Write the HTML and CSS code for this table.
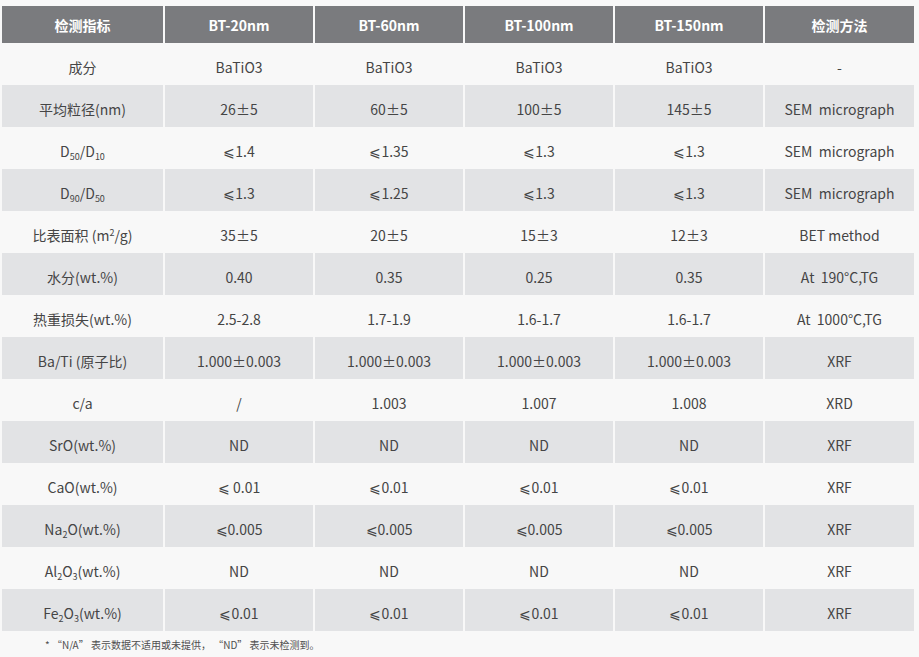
FILE: index.html
```html
<!DOCTYPE html>
<html lang="zh">
<head>
<meta charset="utf-8">
<link rel="stylesheet" href="styles.css">
</head>
<body>
<div class="table">
  <div class="row head">
    <div class="cell">检测指标</div><div class="cell">BT-20nm</div><div class="cell">BT-60nm</div><div class="cell">BT-100nm</div><div class="cell">BT-150nm</div><div class="cell">检测方法</div>
  </div>
  <div class="row">
    <div class="cell">成分</div><div class="cell">BaTiO3</div><div class="cell">BaTiO3</div><div class="cell">BaTiO3</div><div class="cell">BaTiO3</div><div class="cell">-</div>
  </div>
  <div class="row alt">
    <div class="cell">平均粒径(nm)</div><div class="cell">26±5</div><div class="cell">60±5</div><div class="cell">100±5</div><div class="cell">145±5</div><div class="cell">SEM&nbsp; micrograph</div>
  </div>
  <div class="row">
    <div class="cell">D<sub>50</sub>/D<sub>10</sub></div><div class="cell">⩽1.4</div><div class="cell">⩽1.35</div><div class="cell">⩽1.3</div><div class="cell">⩽1.3</div><div class="cell">SEM&nbsp; micrograph</div>
  </div>
  <div class="row alt">
    <div class="cell">D<sub>90</sub>/D<sub>50</sub></div><div class="cell">⩽1.3</div><div class="cell">⩽1.25</div><div class="cell">⩽1.3</div><div class="cell">⩽1.3</div><div class="cell">SEM&nbsp; micrograph</div>
  </div>
  <div class="row">
    <div class="cell">比表面积 (m<sup>2</sup>/g)</div><div class="cell">35±5</div><div class="cell">20±5</div><div class="cell">15±3</div><div class="cell">12±3</div><div class="cell">BET method</div>
  </div>
  <div class="row alt">
    <div class="cell">水分(wt.%)</div><div class="cell">0.40</div><div class="cell">0.35</div><div class="cell">0.25</div><div class="cell">0.35</div><div class="cell">At&nbsp; 190°C,TG</div>
  </div>
  <div class="row">
    <div class="cell">热重损失(wt.%)</div><div class="cell">2.5-2.8</div><div class="cell">1.7-1.9</div><div class="cell">1.6-1.7</div><div class="cell">1.6-1.7</div><div class="cell">At&nbsp; 1000°C,TG</div>
  </div>
  <div class="row alt">
    <div class="cell">Ba/Ti (原子比)</div><div class="cell">1.000±0.003</div><div class="cell">1.000±0.003</div><div class="cell">1.000±0.003</div><div class="cell">1.000±0.003</div><div class="cell">XRF</div>
  </div>
  <div class="row">
    <div class="cell">c/a</div><div class="cell">/</div><div class="cell">1.003</div><div class="cell">1.007</div><div class="cell">1.008</div><div class="cell">XRD</div>
  </div>
  <div class="row alt">
    <div class="cell">SrO(wt.%)</div><div class="cell">ND</div><div class="cell">ND</div><div class="cell">ND</div><div class="cell">ND</div><div class="cell">XRF</div>
  </div>
  <div class="row">
    <div class="cell">CaO(wt.%)</div><div class="cell">⩽ 0.01</div><div class="cell">⩽0.01</div><div class="cell">⩽0.01</div><div class="cell">⩽0.01</div><div class="cell">XRF</div>
  </div>
  <div class="row alt">
    <div class="cell">Na<sub>2</sub>O(wt.%)</div><div class="cell">⩽0.005</div><div class="cell">⩽0.005</div><div class="cell">⩽0.005</div><div class="cell">⩽0.005</div><div class="cell">XRF</div>
  </div>
  <div class="row">
    <div class="cell">Al<sub>2</sub>O<sub>3</sub>(wt.%)</div><div class="cell">ND</div><div class="cell">ND</div><div class="cell">ND</div><div class="cell">ND</div><div class="cell">XRF</div>
  </div>
  <div class="row alt">
    <div class="cell">Fe<sub>2</sub>O<sub>3</sub>(wt.%)</div><div class="cell">⩽0.01</div><div class="cell">⩽0.01</div><div class="cell">⩽0.01</div><div class="cell">⩽0.01</div><div class="cell">XRF</div>
  </div>
</div>
<p class="note">* “N/A” 表示数据不适用或未提供， “ND” 表示未检测到。</p>
</body>
</html>
```

FILE: styles.css
```css
html, body {
  margin: 0;
  padding: 0;
  background: #f8f8f8;
}

body {
  font-family: "Noto Sans CJK SC", "Noto Sans", sans-serif;
  color: #454545;
  font-size: 14px;
}

.table {
  margin: 6px 0 0 2px;
  width: 912px;
}

.row {
  display: grid;
  grid-template-columns: 161px 148px 148px 148px 148px 149px;
  column-gap: 2px;
  height: 42px;
}

.row.head {
  height: 37px;
}

.cell {
  display: block;
  text-align: center;
  line-height: 42px;
  padding-top: 3px;
  height: 42px;
  box-sizing: border-box;
  white-space: nowrap;
  overflow: hidden;
}

.head .cell {
  background: #7a7b7e;
  color: #ffffff;
  font-weight: 700;
  line-height: 37px;
  height: 37px;
  padding-top: 1px;
}

.alt .cell {
  background: #e2e3e5;
}

sub, sup {
  font-size: 9px;
  line-height: 0;
}

sub {
  vertical-align: -3px;
}

sup {
  vertical-align: 5px;
}

.note {
  margin: 7px 0 0 45px;
  font-size: 10px;
  color: #4f4f4f;
  line-height: 14px;
}
```
